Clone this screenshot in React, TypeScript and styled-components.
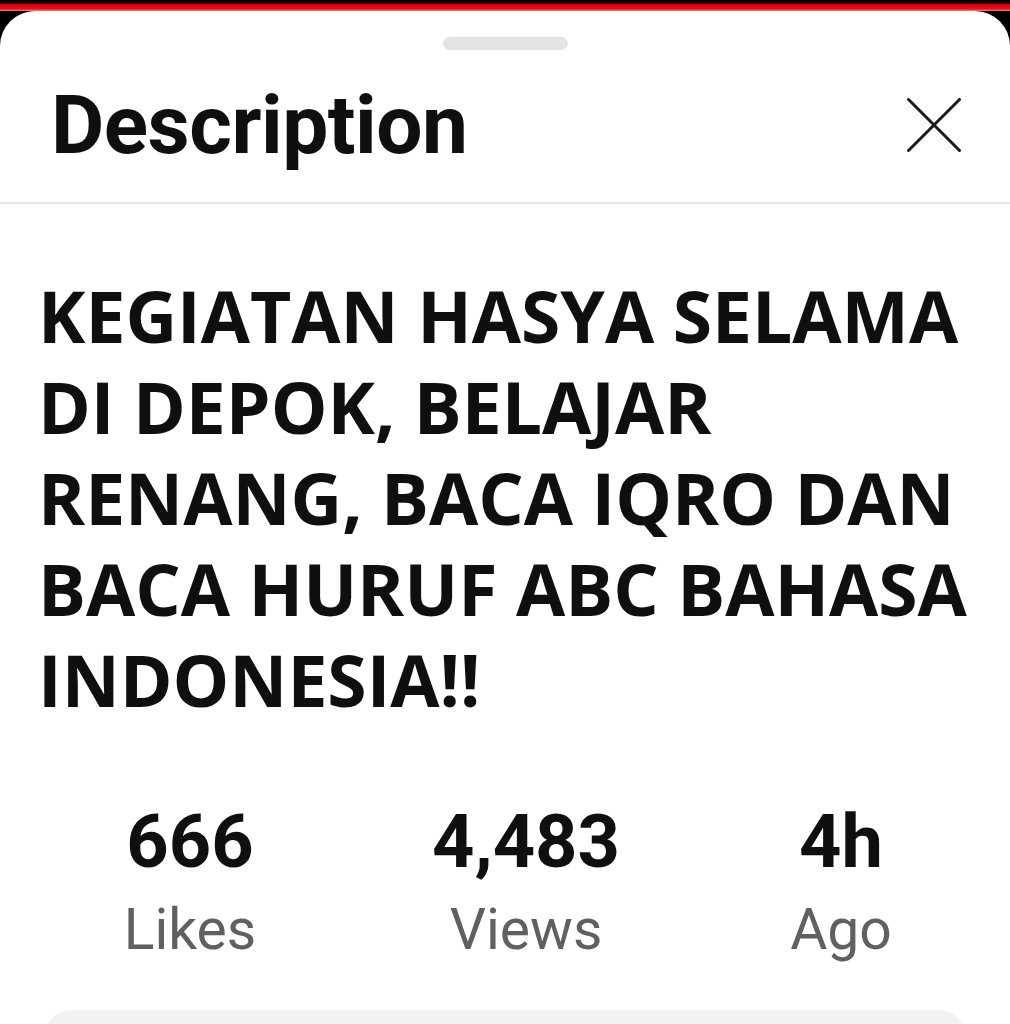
import React from "react";
import styled, { createGlobalStyle } from "styled-components";

const Global = createGlobalStyle`
  html, body {
    margin: 0;
    padding: 0;
    background: #000;
    height: 100%;
    overflow: hidden;
  }
  #root { min-height: 100%; }
`;

const Screen = styled.div`
  display: flex;
  flex-direction: column;
  width: 1010px;
  height: 1024px;
  background: #000;
  overflow: hidden;
`;

const StatusStrip = styled.div`
  height: 11px;
  flex: none;
  background: linear-gradient(
    to bottom,
    #000 0px,
    #000 3px,
    #c4000c 4px,
    #e60012 6px,
    #e8101c 9px,
    #f26a6a 10.5px,
    #000 11px
  );
`;

const Sheet = styled.div`
  flex: 1;
  background: #fff;
  border-radius: 35px 35px 0 0;
  display: flex;
  flex-direction: column;
`;

const Handle = styled.div`
  align-self: center;
  width: 125px;
  height: 13px;
  margin-top: 26px;
  border-radius: 7px;
  background: #e3e3e3;
`;

const Header = styled.div`
  display: flex;
  align-items: center;
  justify-content: space-between;
  margin-top: 27px;
  padding: 0 49px 29px 51px;
  border-bottom: 2px solid #e6e6e6;
`;

const HeaderTitle = styled.h1`
  margin: 0;
  font-family: Roboto, "Liberation Sans", sans-serif;
  font-weight: 700;
  font-size: 82px;
  line-height: 96px;
  color: #0f0f0f;
  letter-spacing: -0.5px;
`;

const CloseButton = styled.button`
  display: flex;
  align-items: center;
  justify-content: center;
  width: 54px;
  height: 54px;
  padding: 0;
  border: none;
  background: none;
`;

const Title = styled.h2`
  margin: 66px 0 0;
  padding: 0 30px 0 38px;
  font-family: "Open Sans", "Noto Sans", sans-serif;
  font-weight: 700;
  font-size: 71.4px;
  line-height: 91px;
  color: #0f0f0f;
`;

const Stats = styled.div`
  display: grid;
  grid-template-columns: 380px 292px 338px;
  justify-items: center;
  margin-top: 77px;
`;

const Stat = styled.div`
  display: flex;
  flex-direction: column;
  align-items: center;
  gap: 13px;
`;

const StatValue = styled.div`
  font-family: Roboto, "Liberation Sans", sans-serif;
  font-weight: 700;
  font-size: 74px;
  line-height: 80px;
  color: #0f0f0f;
`;

const StatLabel = styled.div`
  font-family: Roboto, "Liberation Sans", sans-serif;
  font-weight: 400;
  font-size: 57px;
  line-height: 70px;
  color: #606060;
`;

const InfoCard = styled.div`
  margin: 45px 45px 0;
  height: 200px;
  border-radius: 26px;
  background: #f2f2f2;
`;

const stats = [
  { value: "666", label: "Likes" },
  { value: "4,483", label: "Views" },
  { value: "4h", label: "Ago" },
];

export default function App() {
  return (
    <Screen>
      <Global />
      <StatusStrip />
      <Sheet>
        <Handle />
        <Header>
          <HeaderTitle>Description</HeaderTitle>
          <CloseButton aria-label="Close">
            <svg width="54" height="54" viewBox="0 0 54 54">
              <path
                d="M1.5 1.5 L52.5 52.5 M52.5 1.5 L1.5 52.5"
                stroke="#1a1a1a"
                strokeWidth="3"
                strokeLinecap="round"
                fill="none"
              />
            </svg>
          </CloseButton>
        </Header>
        <Title>
          KEGIATAN HASYA SELAMA DI DEPOK, BELAJAR RENANG, BACA IQRO DAN BACA
          HURUF ABC BAHASA INDONESIA!!
        </Title>
        <Stats>
          {stats.map((s) => (
            <Stat key={s.label}>
              <StatValue>{s.value}</StatValue>
              <StatLabel>{s.label}</StatLabel>
            </Stat>
          ))}
        </Stats>
        <InfoCard />
      </Sheet>
    </Screen>
  );
}
